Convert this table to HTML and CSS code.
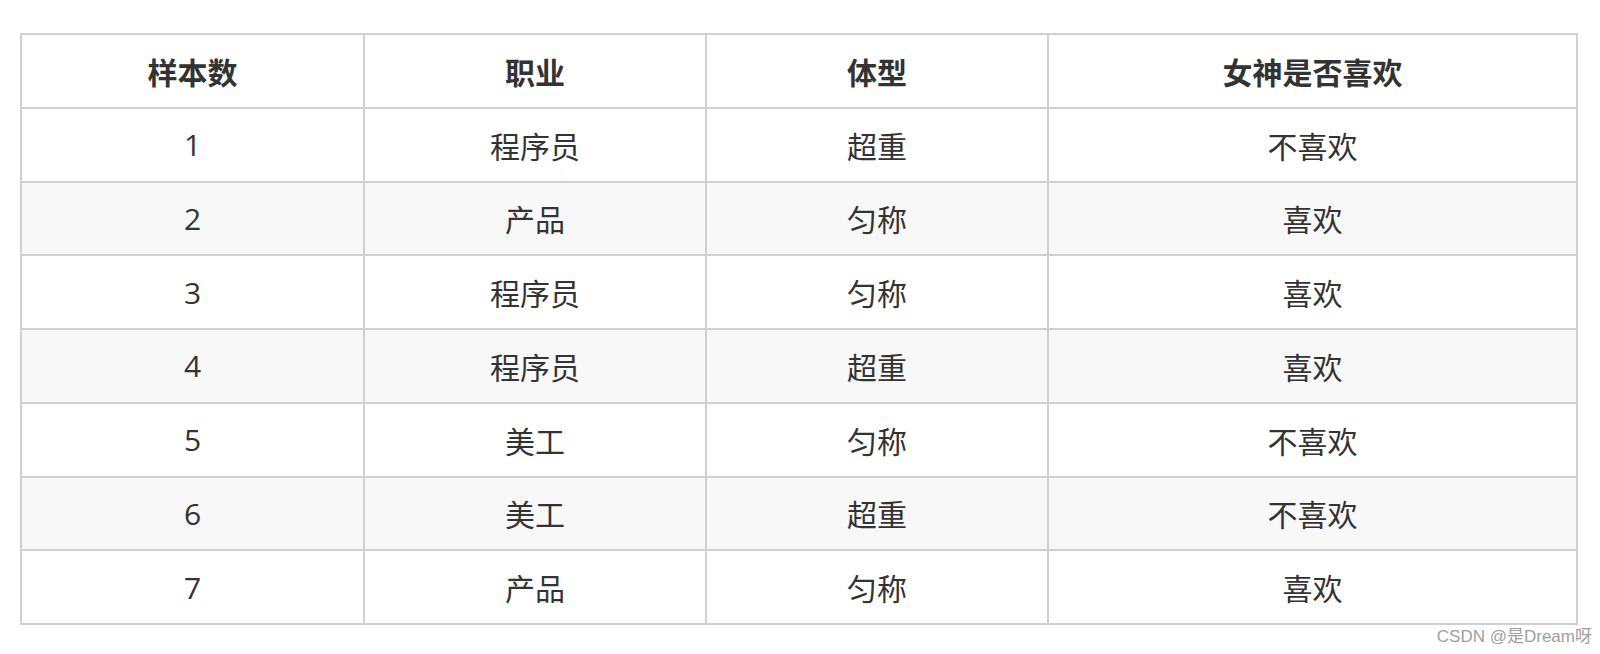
FILE: index.html
```html
<!DOCTYPE html>
<html lang="zh">
<head>
<meta charset="utf-8">
<link rel="stylesheet" href="styles.css">
</head>
<body>
<div class="page">
  <table class="data">
    <colgroup>
      <col class="c1"><col class="c2"><col class="c3"><col class="c4">
    </colgroup>
    <thead>
      <tr><th>样本数</th><th>职业</th><th>体型</th><th>女神是否喜欢</th></tr>
    </thead>
    <tbody>
      <tr><td>1</td><td>程序员</td><td>超重</td><td>不喜欢</td></tr>
      <tr><td>2</td><td>产品</td><td>匀称</td><td>喜欢</td></tr>
      <tr><td>3</td><td>程序员</td><td>匀称</td><td>喜欢</td></tr>
      <tr><td>4</td><td>程序员</td><td>超重</td><td>喜欢</td></tr>
      <tr><td>5</td><td>美工</td><td>匀称</td><td>不喜欢</td></tr>
      <tr><td>6</td><td>美工</td><td>超重</td><td>不喜欢</td></tr>
      <tr><td>7</td><td>产品</td><td>匀称</td><td>喜欢</td></tr>
    </tbody>
  </table>
  <div class="watermark">CSDN @是Dream呀</div>
</div>
</body>
</html>
```
FILE: styles.css
```css
html, body {
  margin: 0;
  padding: 0;
  background: #ffffff;
}
.page {
  padding: 33px 0 0 20px;
  width: 1572px;
}
.data {
  border-collapse: collapse;
  width: 1556px;
  table-layout: fixed;
  font-family: "Open Sans", "Noto Sans CJK SC", sans-serif;
  font-size: 30px;
  color: #333333;
}
.c1 { width: 343px; }
.c2 { width: 342px; }
.c3 { width: 342px; }
.c4 { width: 529px; }
.data th, .data td {
  border: 2px solid #d0d0d0;
  height: 73.75px;
  padding: 0;
  text-align: center;
  vertical-align: middle;
  box-sizing: border-box;
}
.data th {
  font-weight: 700;
}
.data td {
  font-weight: 400;
}
.data tbody tr:nth-child(even) td {
  background: #f8f8f8;
}
.watermark {
  text-align: right;
  font-family: "Liberation Sans", "Noto Sans CJK SC", sans-serif;
  font-size: 17px;
  color: #a0a0a0;
  margin-top: -3px;
}
```
